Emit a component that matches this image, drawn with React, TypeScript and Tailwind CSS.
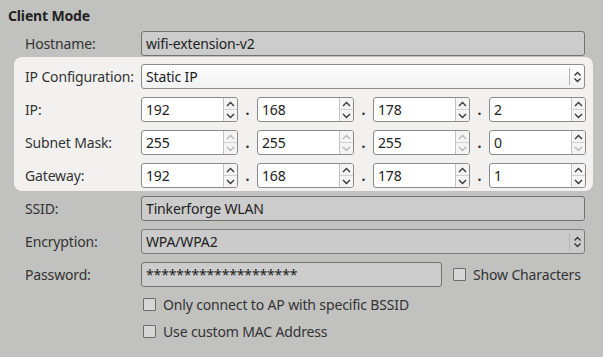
import React from "react";

const Up = ({ c }: { c: string }) => (
  <svg width="9" height="6" viewBox="0 0 9 6"><path d="M1 5 L4.5 1.5 L8 5" fill="none" stroke={c} strokeWidth="1.3" /></svg>
);
const Down = ({ c }: { c: string }) => (
  <svg width="9" height="6" viewBox="0 0 9 6"><path d="M1 1 L4.5 4.5 L8 1" fill="none" stroke={c} strokeWidth="1.3" /></svg>
);

function Spin({ v, upOff, downOff }: { v: string; upOff?: boolean; downOff?: boolean }) {
  return (
    <div className="flex h-[25px] w-[97px] rounded-[3px] border border-[#8b8b8b] bg-white overflow-hidden">
      <div className="flex-1 flex items-center pl-[4px] text-[#222]">{v}</div>
      <div className="w-[14px] flex flex-col border-l border-[#c4c4c4] bg-[#f4f4f4]">
        <div className="flex-1 flex items-center justify-center border-b border-[#d0d0d0]"><Up c={upOff ? "#b5b5b5" : "#333"} /></div>
        <div className="flex-1 flex items-center justify-center"><Down c={downOff ? "#b5b5b5" : "#333"} /></div>
      </div>
    </div>
  );
}

function IpRow({ label, vals, off }: { label: string; vals: string[]; off?: [boolean, boolean][] }) {
  return (
    <div className="flex items-center h-[25px]">
      <div className="w-[116px] shrink-0">{label}</div>
      <div className="flex items-center">
        {vals.map((v, i) => (
          <React.Fragment key={i}>
            {i > 0 && <div className="w-[19px] text-center font-bold text-[#333]">.</div>}
            <Spin v={v} upOff={off ? off[i][0] : false} downOff={off ? off[i][1] : false} />
          </React.Fragment>
        ))}
      </div>
    </div>
  );
}

function UpDown({ c }: { c: string }) {
  return (
    <svg width="9" height="12" viewBox="0 0 9 12">
      <path d="M1.5 4.5 L4.5 1.5 L7.5 4.5" fill="none" stroke={c} strokeWidth="1.3" />
      <path d="M1.5 7.5 L4.5 10.5 L7.5 7.5" fill="none" stroke={c} strokeWidth="1.3" />
    </svg>
  );
}

function Combo({ text, disabled }: { text: string; disabled?: boolean }) {
  return (
    <div
      className={
        "flex-1 flex items-center h-[25px] rounded-[3px] border " +
        (disabled ? "border-[#7d7d7d] bg-[#cbcbcb]" : "border-[#8b8b8b] bg-gradient-to-b from-white to-[#f1f1f1]")
      }
    >
      <div className="flex-1 pl-[4px] text-[#222]">{text}</div>
      <div className="w-[1px] h-[17px] bg-[#b4b4b4]" />
      <div className="w-[14px] flex justify-center"><UpDown c="#333" /></div>
    </div>
  );
}

function TextField({ text, w }: { text: string; w?: string }) {
  return (
    <div className={(w ?? "flex-1") + " flex items-center h-[25px] rounded-[3px] border border-[#727272] bg-[#cccccc] pl-[4px] text-[#222]"}>
      {text}
    </div>
  );
}

function Check() {
  return <div className="w-[13px] h-[13px] border border-[#6c6c6c] bg-[#d6d6d6] rounded-[1px] shrink-0" />;
}

export default function App() {
  return (
    <div
      className="w-[603px] h-[357px] bg-[#c1c1bf] text-[14px] tracking-[-0.15px] text-[#333] overflow-hidden"
      style={{ fontFamily: '"Noto Sans", "Open Sans", sans-serif' }}
    >
      <div className="pl-[8px] pt-[5px] h-[31px] font-bold text-[#222]">Client Mode</div>
      <div className="px-[14px] pr-[10px]">
        <div className="flex items-center h-[25px] pl-[11px] pr-[8px]">
          <div className="w-[116px] shrink-0">Hostname:</div>
          <TextField text="wifi-extension-v2" />
        </div>
        <div className="mt-[1px] rounded-[8px] bg-[#f2f1f0] pl-[11px] pr-[8px] pt-[7px] pb-[3px] flex flex-col gap-[8px]">
          <div className="flex items-center h-[25px]">
            <div className="w-[116px] shrink-0">IP Configuration:</div>
            <Combo text="Static IP" />
          </div>
          <IpRow label="IP:" vals={["192", "168", "178", "2"]} />
          <IpRow
            label="Subnet Mask:"
            vals={["255", "255", "255", "0"]}
            off={[[true, true], [true, true], [true, true], [false, true]]}
          />
          <IpRow label="Gateway:" vals={["192", "168", "178", "1"]} />
        </div>
        <div className="mt-[5px] pl-[11px] pr-[8px] flex flex-col gap-[8px]">
          <div className="flex items-center h-[25px]">
            <div className="w-[116px] shrink-0">SSID:</div>
            <TextField text="Tinkerforge WLAN" />
          </div>
          <div className="flex items-center h-[25px]">
            <div className="w-[116px] shrink-0">Encryption:</div>
            <Combo text="WPA/WPA2" disabled />
          </div>
          <div className="flex items-center h-[25px]">
            <div className="w-[116px] shrink-0">Password:</div>
            <TextField text="********************" w="w-[301px]" />
            <div className="ml-[11px] flex items-center gap-[7px]">
              <Check />
              <span>Show Characters</span>
            </div>
          </div>
        </div>
        <div className="pl-[129px] mt-[4px] flex flex-col">
          <div className="flex items-center gap-[7px] h-[27px]">
            <Check />
            <span>Only connect to AP with specific BSSID</span>
          </div>
          <div className="flex items-center gap-[7px] h-[27px]">
            <Check />
            <span>Use custom MAC Address</span>
          </div>
        </div>
      </div>
    </div>
  );
}
